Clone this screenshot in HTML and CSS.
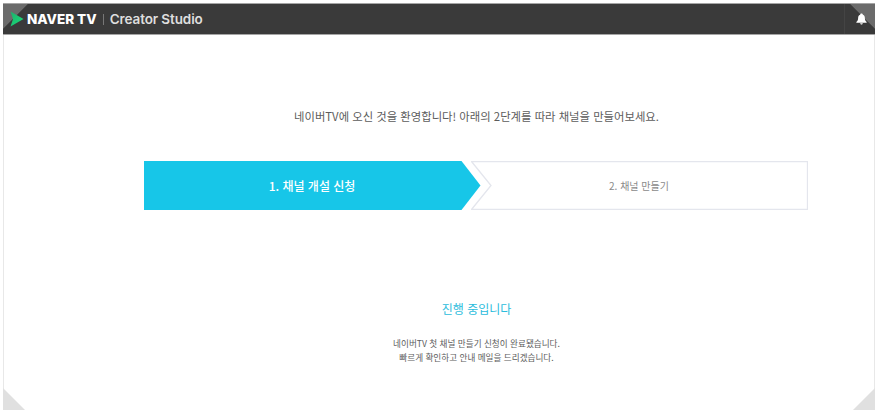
FILE: index.html
```html
<!DOCTYPE html>
<html lang="ko">
<head>
    <meta charset="UTF-8">
    <meta name="viewport" content="width=device-width, initial-scale=1.0">
    <title>NAVER TV Creator Studio</title>
    <link rel="stylesheet" href="styles.css">
</head>
<body>
    <div class="page">
        <header class="topbar">
            <div class="brand">
                <svg class="brand-icon" width="14" height="16" viewBox="0 0 14 16">
                    <defs>
                        <linearGradient id="playGreen" x1="0" y1="0" x2="1" y2="1">
                            <stop offset="0" stop-color="#1fae6c"/>
                            <stop offset="1" stop-color="#17e07a"/>
                        </linearGradient>
                    </defs>
                    <path d="M0.5 0.5 L13.5 8 L0.5 15.5 L3 8 Z" fill="url(#playGreen)"/>
                </svg>
                <span class="brand-name">NAVER TV</span>
                <span class="brand-sep"></span>
                <span class="brand-sub">Creator Studio</span>
            </div>
            <div class="bell">
                <svg width="11" height="12" viewBox="0 0 12 13">
                    <path d="M6 0.5 C7 0.5 7.4 1.2 7.5 1.9 C9.2 2.5 9.6 4 9.7 5.6 C9.8 7.6 10.4 8.6 11.6 9.8 L11.6 10.6 L0.4 10.6 L0.4 9.8 C1.6 8.6 2.2 7.6 2.3 5.6 C2.4 4 2.8 2.5 4.5 1.9 C4.6 1.2 5 0.5 6 0.5 Z M4.5 11.2 L7.5 11.2 C7.3 12.1 6.7 12.5 6 12.5 C5.3 12.5 4.7 12.1 4.5 11.2 Z" fill="#fff"/>
                </svg>
            </div>
        </header>

        <main class="content">
            <p class="welcome">네이버TV에 오신 것을 환영합니다! 아래의 2단계를 따라 채널을 만들어보세요.</p>

            <div class="steps">
                <div class="step step-active">1. 채널 개설 신청</div>
                <div class="step step-next">
                    <svg class="step-outline" width="337" height="49" viewBox="0 0 337 49">
                        <path d="M0.5 0.5 H336.5 V48.5 H0.5 L20 24.5 Z" fill="#fff" stroke="#e4e6ed" stroke-width="1.3"/>
                    </svg>
                    <span class="step-label">2. 채널 만들기</span>
                </div>
            </div>

            <h2 class="status">진행 중입니다</h2>
            <p class="notice">네이버TV 첫 채널 만들기 신청이 완료됐습니다.<br>빠르게 확인하고 안내 메일을 드리겠습니다.</p>
        </main>

        <div class="fold fold-left"></div>
        <div class="fold fold-right"></div>
    </div>
</body>
</html>
```

FILE: styles.css
```css
body {
    margin: 0;
    background-color: #fff;
    font-family: "Noto Sans CJK KR", "Noto Sans", sans-serif;
}

.page {
    position: relative;
    height: 410px;
    padding: 3px 1px 0 3px;
    box-sizing: border-box;
    overflow: hidden;
}

.topbar {
    display: flex;
    justify-content: space-between;
    align-items: center;
    height: 32px;
    background-color: #3a3a3a;
    border-top: 1px solid #a5a5a5;
    border-bottom: 1px solid #a5a5a5;
    box-sizing: border-box;
    color: #fff;
    background-image: linear-gradient(135deg, #6b6b6b 0, #6b6b6b 17px, transparent 18px);
}

.brand {
    display: flex;
    align-items: center;
    padding-left: 7px;
}

.brand-icon {
    margin-right: 3px;
}

.brand-name {
    font-family: Inter, sans-serif;
    font-size: 13.5px;
    font-weight: 800;
    letter-spacing: 0;
}

.brand-sep {
    width: 1px;
    height: 11px;
    margin: 0 6px;
    background-color: #777;
}

.brand-sub {
    font-family: Inter, sans-serif;
    font-size: 13.5px;
    font-weight: 600;
    color: #dedede;
    letter-spacing: -0.1px;
}

.bell {
    display: flex;
    justify-content: center;
    align-items: center;
    width: 31px;
    height: 100%;
    padding-left: 2px;
    border-left: 1px solid #444;
    box-sizing: border-box;
    background-image: linear-gradient(225deg, #6b6b6b 0, #6b6b6b 17px, transparent 18px);
}

.content {
    display: flex;
    flex-direction: column;
    align-items: center;
    height: 375px;
    padding-left: 73px;
    border-left: 1px solid #e8e8e8;
    border-right: 1px solid #e8e8e8;
    box-sizing: border-box;
}

.welcome {
    margin: 72px 0 0;
    padding-left: 2px;
    font-size: 11.35px;
    line-height: 18px;
    color: #5c5c5c;
}

.steps {
    display: flex;
    margin-top: 36px;
    width: 664px;
}

.step {
    width: 337px;
    height: 49px;
    display: flex;
    justify-content: center;
    align-items: center;
}

.step-active {
    background-color: #17c6e8;
    color: #fff;
    font-size: 12px;
    font-weight: 500;
    clip-path: polygon(0 0, 318px 0, 100% 50%, 318px 100%, 0 100%);
}

.step-next {
    position: relative;
    margin-left: -10px;
}

.step-outline {
    position: absolute;
    top: 0;
    left: 0;
}

.step-label {
    position: relative;
    font-size: 10px;
    color: #8a8a8a;
}

.status {
    margin: 90px 0 0;
    padding-left: 2px;
    font-size: 12px;
    line-height: 18px;
    font-weight: 400;
    color: #2bbcdc;
}

.notice {
    margin: 18px 0 0;
    padding-left: 2px;
    font-size: 8.6px;
    line-height: 14px;
    text-align: center;
    color: #5c5c5c;
}

.fold {
    position: absolute;
    bottom: 0;
    width: 22px;
    height: 22px;
    background-color: #e0e0e0;
}

.fold-left {
    left: 3px;
    clip-path: polygon(0 0, 100% 100%, 0 100%);
}

.fold-right {
    right: 1px;
    clip-path: polygon(100% 0, 100% 100%, 0 100%);
}
```
